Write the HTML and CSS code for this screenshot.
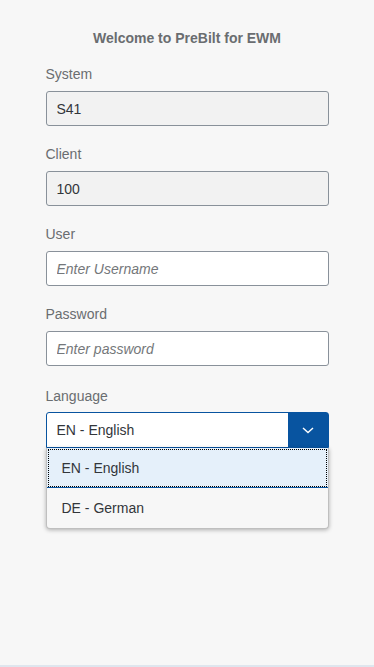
FILE: index.html
```html
<!DOCTYPE html>
<html lang="en">

<head>
    <meta charset="UTF-8">
    <meta name="viewport" content="width=device-width, initial-scale=1.0">
    <title>PreBilt for EWM</title>
    <link rel="stylesheet" href="styles.css">
</head>

<body>
    <div class="login">
        <h1 class="title">Welcome to PreBilt for EWM</h1>

        <label class="field-label" for="system">System</label>
        <input class="field readonly" id="system" type="text" value="S41" readonly>

        <label class="field-label" for="client">Client</label>
        <input class="field readonly" id="client" type="text" value="100" readonly>

        <label class="field-label" for="user">User</label>
        <input class="field" id="user" type="text" placeholder="Enter Username">

        <label class="field-label" for="password">Password</label>
        <input class="field" id="password" type="password" placeholder="Enter password">

        <label class="field-label lang-label">Language</label>
        <div class="select-wrap">
            <div class="select">
                <span class="select-value">EN - English</span>
                <span class="select-arrow">
                    <svg width="14" height="14" viewBox="0 0 14 14">
                        <path d="M2 5 L7 9.5 L12 5" fill="none" stroke="#fff" stroke-width="1.4"/>
                    </svg>
                </span>
            </div>
            <ul class="options">
                <li class="option selected"><span>EN - English</span></li>
                <li class="option">DE - German</li>
            </ul>
        </div>
    </div>
    <div class="footer-line"></div>
</body>

</html>
```

FILE: styles.css
```css
html,
body {
    height: 100%;
}

body {
    margin: 0;
    background: #f7f7f7;
    font-family: "Liberation Sans", Arial, sans-serif;
    font-size: 14px;
    color: #32363a;
    display: flex;
    flex-direction: column;
}

.login {
    flex: 1;
    width: 283px;
    margin: 0 auto;
    padding-top: 28px;
    display: flex;
    flex-direction: column;
}

.title {
    margin: 0 0 16px;
    font-size: 14px;
    line-height: 20px;
    font-weight: bold;
    color: #6a6d70;
    text-align: center;
}

.field-label {
    display: block;
    line-height: 20px;
    margin-bottom: 7px;
    color: #6a6d70;
}

.field {
    box-sizing: border-box;
    width: 100%;
    height: 35px;
    margin: 0 0 18px;
    padding: 0 10px;
    border: 1px solid #89919a;
    border-radius: 3px;
    background: #fff;
    font-family: inherit;
    font-size: 14px;
    color: #32363a;
    outline: none;
}

.field.readonly {
    background: #f2f2f2;
}

.field::placeholder {
    color: #74777a;
    font-style: italic;
}

.lang-label {
    margin-top: 2px;
    margin-bottom: 6px;
}

.select-wrap {
    position: relative;
}

.select {
    box-sizing: border-box;
    height: 36px;
    display: flex;
    border: 1px solid #0854a0;
    border-radius: 3px 3px 0 0;
    background: #fff;
}

.select-value {
    flex: 1;
    display: flex;
    align-items: center;
    padding-left: 10px;
}

.select-arrow {
    width: 40px;
    display: flex;
    align-items: center;
    justify-content: center;
    background: #0854a0;
}

.options {
    position: absolute;
    left: 0;
    right: 0;
    top: 36px;
    margin: 0;
    padding: 0;
    list-style: none;
    background: #f7f7f7;
    border: 1px solid #bfbfbf;
    border-top: none;
    border-radius: 0 0 4px 4px;
    box-shadow: 0 1px 4px rgba(0, 0, 0, 0.3);
}

.option {
    box-sizing: border-box;
    height: 40px;
    display: flex;
    align-items: center;
    padding-left: 15px;
}

.option.selected {
    background: #e5f0fa;
    border-bottom: 1px solid #0854a0;
    outline: 1px dotted #000;
    outline-offset: -2px;
}

.footer-line {
    height: 2px;
    background: #dfe6ee;
}
```
